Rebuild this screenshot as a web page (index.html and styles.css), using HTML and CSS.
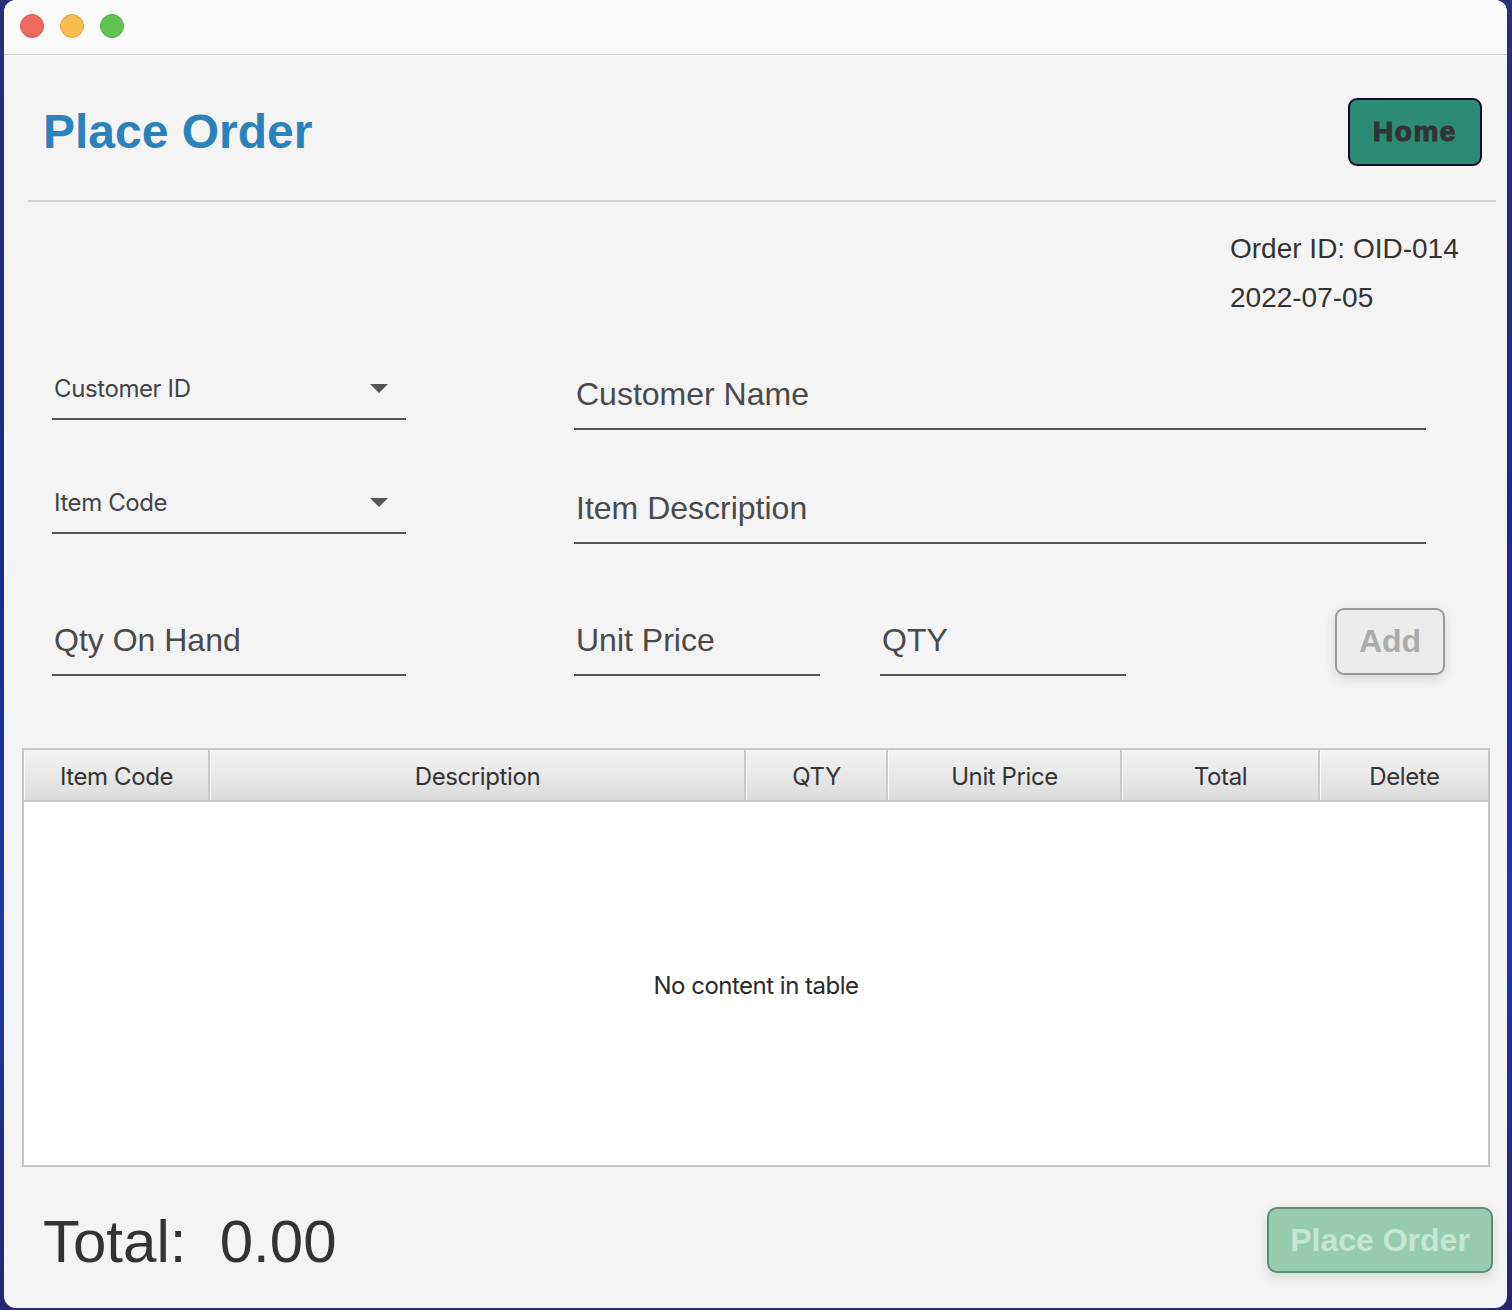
FILE: index.html
```html
<!DOCTYPE html>
<html>
<head>
<meta charset="utf-8">
<link rel="stylesheet" href="styles.css">
</head>
<body>
<div class="window">
  <div class="titlebar">
    <span class="light red"></span>
    <span class="light yellow"></span>
    <span class="light green"></span>
  </div>
  <div class="content">
    <div class="header">
      <h1 class="title">Place Order</h1>
      <button class="home-btn">Home</button>
    </div>
    <div class="separator"></div>
    <div class="order-info">
      <div>Order ID: OID-014</div>
      <div>2022-07-05</div>
    </div>

    <div class="form-row row1">
      <div class="combo w-left"><span class="combo-text">Customer ID</span><span class="arrow"></span></div>
      <div class="tf w-wide">Customer Name</div>
    </div>
    <div class="form-row row2">
      <div class="combo w-left"><span class="combo-text">Item Code</span><span class="arrow"></span></div>
      <div class="tf w-wide">Item Description</div>
    </div>
    <div class="form-row row3">
      <div class="tf w-left">Qty On Hand</div>
      <div class="tf w-small">Unit Price</div>
      <div class="tf w-small qty">QTY</div>
      <button class="add-btn">Add</button>
    </div>

    <div class="table">
      <div class="thead">
        <div class="th">Item Code</div>
        <div class="th">Description</div>
        <div class="th">QTY</div>
        <div class="th">Unit Price</div>
        <div class="th">Total</div>
        <div class="th last">Delete</div>
      </div>
      <div class="tbody">No content in table</div>
    </div>

    <div class="footer">
      <div class="total">Total:&nbsp; 0.00</div>
      <button class="place-btn">Place Order</button>
    </div>
  </div>
</div>
</body>
</html>
```

FILE: styles.css
```css
html, body {
  margin: 0;
  padding: 0;
}
body {
  width: 1512px;
  height: 1310px;
  overflow: hidden;
  background: linear-gradient(180deg, #2a2f7a 0%, #1b2a8c 40%, #1a3aa8 70%, #2a2470 100%);
  font-family: "Liberation Sans", Arial, sans-serif;
  color: #333;
}
.window {
  margin-left: 4px;
  width: 1503px;
  height: 1308px;
  border-radius: 12px;
  overflow: hidden;
  background: #f4f4f4;
  display: flex;
  flex-direction: column;
}
.titlebar {
  height: 54px;
  background: #fafafa;
  border-bottom: 1px solid #d0d0d0;
  display: flex;
  align-items: center;
  padding-left: 16px;
  gap: 16px;
  flex-shrink: 0;
}
.light {
  width: 24px;
  height: 24px;
  border-radius: 50%;
  box-sizing: border-box;
  margin-top: -2px;
}
.red { background: #ee6a5f; border: 1px solid #d9574d; }
.yellow { background: #f6be4f; border: 1px solid #dfa73a; }
.green { background: #62c454; border: 1px solid #4fae42; }

.content {
  flex: 1;
  display: flex;
  flex-direction: column;
}
.header {
  height: 145px;
  box-sizing: border-box;
  padding: 43px 25px 0 39px;
  display: flex;
  justify-content: space-between;
  align-items: flex-start;
}
.title {
  margin: 0;
  font-size: 48px;
  line-height: 68px;
  font-weight: bold;
  color: #2a82bd;
}
.home-btn {
  width: 134px;
  height: 68px;
  box-sizing: border-box;
  background: #2c8c73;
  border: 2px solid #0c0c2c;
  border-radius: 9px;
  font-family: "Liberation Sans", Arial, sans-serif;
  font-weight: bold;
  font-size: 28px;
  letter-spacing: 1.5px;
  -webkit-text-stroke: 1.2px #333;
  color: #333;
  padding: 0;
}
.separator {
  height: 2px;
  background: #d2d2d2;
  margin: 0 11px 0 24px;
}
.order-info {
  margin-top: 22px;
  padding-left: 1226px;
  font-size: 28px;
  line-height: 49px;
  color: #333;
}

.form-row {
  display: flex;
  padding-left: 48px;
  gap: 168px;
  align-items: flex-start;
}
.row1 { margin-top: 38px; }
.row2 { margin-top: 44px; }
.row3 { margin-top: 62px; gap: 0; }

.combo {
  height: 60px;
  box-sizing: border-box;
  border-bottom: 2px solid #555;
  padding: 14px 18px 0 2px;
  display: flex;
  justify-content: space-between;
  align-items: flex-start;
  font-family: Inter, "Noto Sans", sans-serif;
  font-size: 24px;
  letter-spacing: -0.4px;
  line-height: 30px;
  color: #444;
}
.combo-text {
  line-height: 30px;
}
.arrow {
  width: 0;
  height: 0;
  border-left: 9px solid transparent;
  border-right: 9px solid transparent;
  border-top: 9px solid #555;
  margin-top: 10px;
}
.tf {
  height: 70px;
  box-sizing: border-box;
  border-bottom: 2px solid #555;
  padding: 14px 0 0 2px;
  font-size: 32px;
  line-height: 40px;
  color: #4a4a4a;
}
.w-left { width: 354px; }
.w-wide { width: 852px; }
.w-small { width: 246px; }
.row3 .w-small { margin-left: 168px; }
.row3 .qty { margin-left: 60px; }
.add-btn {
  margin-left: 209px;
  margin-top: 2px;
  width: 110px;
  height: 67px;
  box-sizing: border-box;
  background: #ececec;
  border: 2px solid #9a9a9a;
  border-radius: 9px;
  font-family: "Liberation Sans", Arial, sans-serif;
  font-weight: bold;
  font-size: 32px;
  color: #ababab;
  padding: 0;
  box-shadow: 0 4px 12px rgba(0, 0, 0, 0.12);
}

.table {
  margin: 72px 0 0 18px;
  width: 1468px;
  height: 419px;
  box-sizing: border-box;
  border: 2px solid #c6c6c6;
  background: #fff;
  display: flex;
  flex-direction: column;
}
.thead {
  display: grid;
  grid-template-columns: 186px 536px 142px 234px 198px 168px;
  height: 52px;
  box-sizing: border-box;
  border-bottom: 2px solid #c8c8c8;
}
.th {
  background: linear-gradient(180deg, #f3f3f3 0%, #e6e6e6 60%, #dcdcdc 100%);
  border-left: 1px solid #fbfbfb;
  border-right: 2px solid #c9c9c9;
  box-sizing: border-box;
  padding-top: 3px;
  display: flex;
  align-items: center;
  justify-content: center;
  font-family: Inter, "Noto Sans", sans-serif;
  font-size: 24px;
  letter-spacing: -0.4px;
  color: #333;
}
.th.last { border-right: none; }
.tbody {
  flex: 1;
  display: flex;
  align-items: center;
  justify-content: center;
  padding-top: 3px;
  font-family: Inter, "Noto Sans", sans-serif;
  font-size: 24px;
  letter-spacing: -0.5px;
  color: #2a2a2a;
}

.footer {
  margin-top: 40px;
  display: flex;
  justify-content: space-between;
  align-items: flex-start;
  padding: 0 14px 0 39px;
}
.total {
  margin-top: 2px;
  font-size: 60px;
  line-height: 66px;
  color: #333;
}
.place-btn {
  width: 226px;
  height: 66px;
  box-sizing: border-box;
  background: #97cbb0;
  border: 2px solid #5f8b74;
  border-radius: 10px;
  font-family: "Liberation Sans", Arial, sans-serif;
  font-weight: bold;
  font-size: 32px;
  color: #c6e6d3;
  padding: 0;
  box-shadow: 0 4px 12px rgba(0, 0, 0, 0.12);
}
```
